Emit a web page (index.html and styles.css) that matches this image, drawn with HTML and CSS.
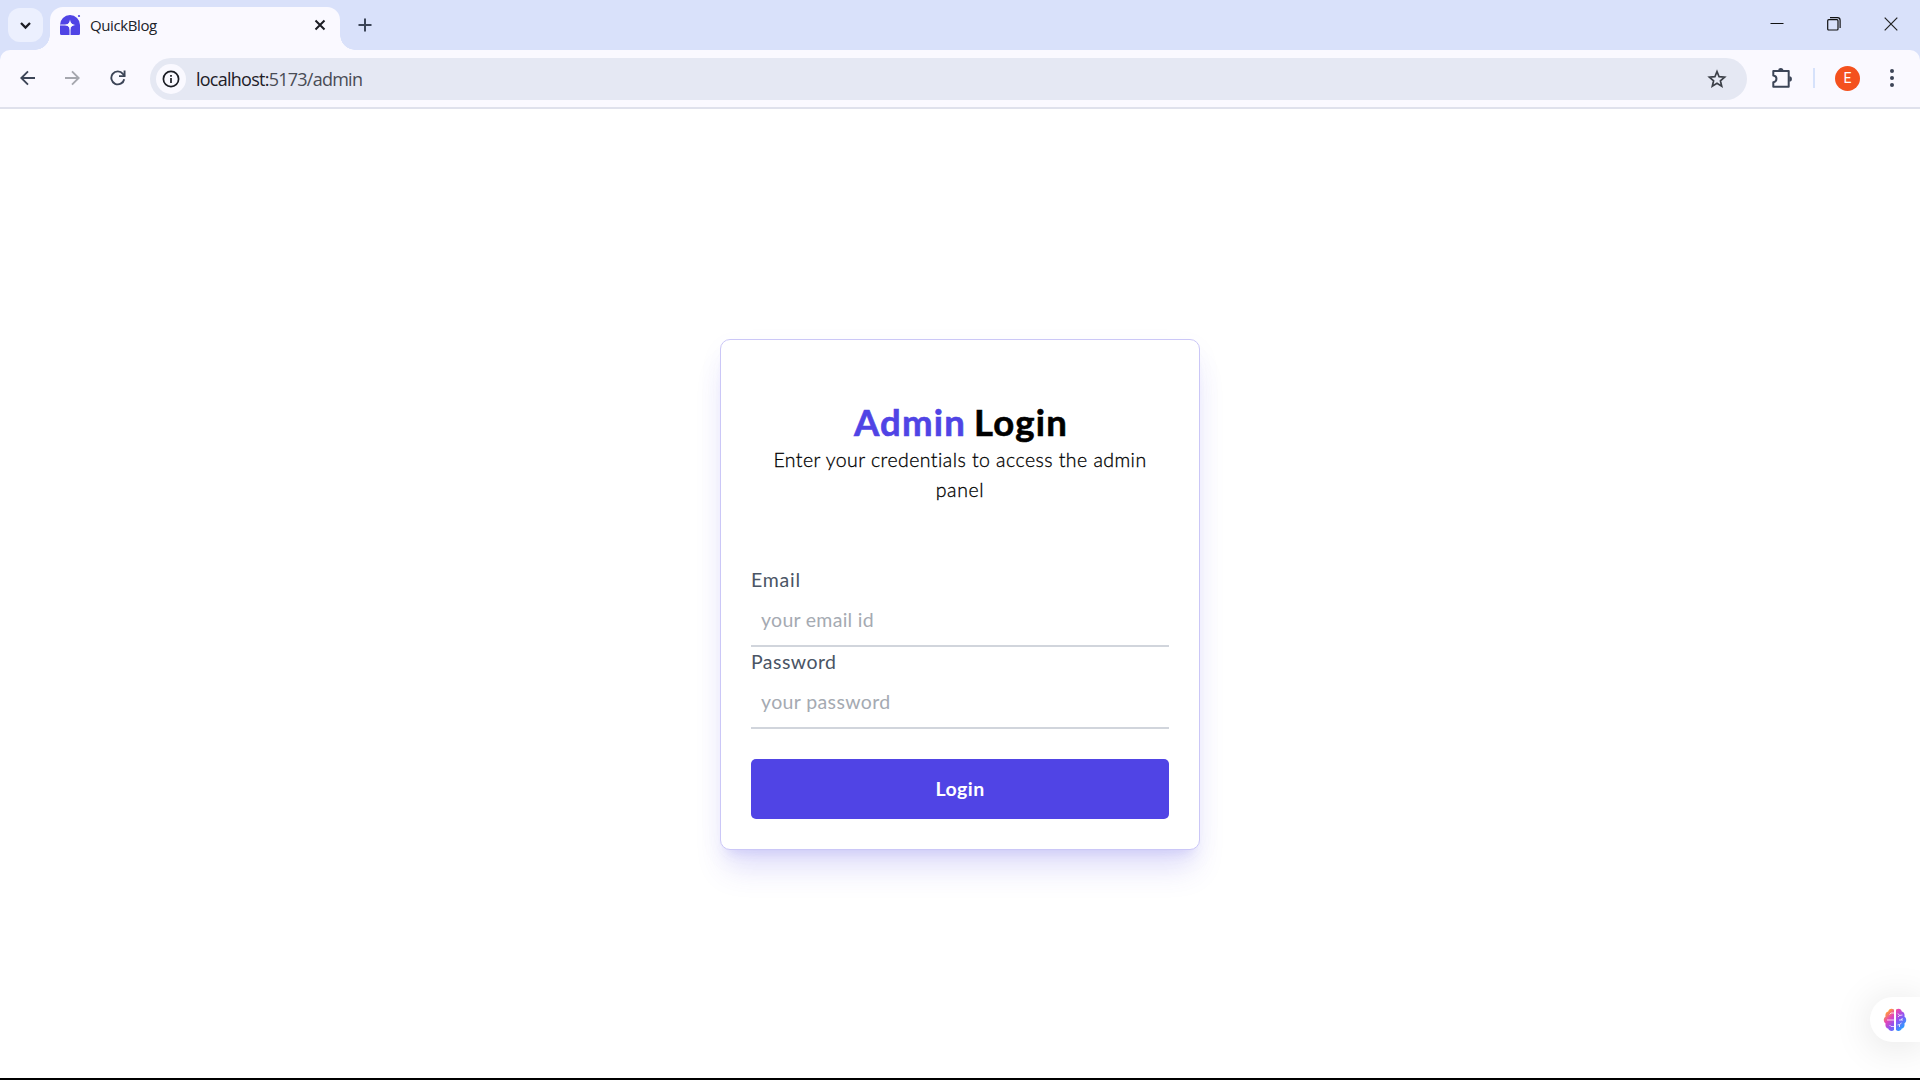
FILE: index.html
```html
<!DOCTYPE html>
<html lang="en">
<head>
<meta charset="utf-8">
<title>QuickBlog</title>
<link rel="stylesheet" href="styles.css">
</head>
<body>
<div class="window">
  <header class="tabstrip">
    <button class="tab-search"><svg width="35" height="34" viewBox="0 0 35 34"><path d="M13 15l4.500 4.500 4.500-4.500" fill="none" stroke="#1b1d24" stroke-width="2.300"/></svg></button>
    <div class="tab">
      <svg class="favicon" width="22" height="22" viewBox="0 0 22 22"><path d="M1 21V11a10 10 0 0 1 20 0v8.500q0 1.500-1.500 1.500h-17Q1 21 1 19.500z" fill="#5044e5"/><path d="M1 10.200h7v1.600H1zM10.200 14h1.700v7h-1.700z" fill="#b9b4f5"/><path d="M11 5.500c.7 3.700 1.700 4.700 5.500 5.500-3.800.8-4.800 1.800-5.500 5.500-.7-3.700-1.700-4.700-5.500-5.500 3.800-.8 4.800-1.800 5.500-5.500z" fill="#fff"/><circle cx="20" cy="2" r="1.100" fill="#5044e5"/></svg>
      <span class="tab-title">QuickBlog</span>
      <svg class="tab-close" width="12" height="12" viewBox="0 0 12 12"><path d="M1.500 1.500l9 9M10.500 1.500l-9 9" stroke="#1b1d24" stroke-width="2"/></svg>
    </div>
    <svg class="new-tab" width="14" height="14" viewBox="0 0 14 14"><path d="M7 .5v13M.5 7h13" stroke="#3c4557" stroke-width="2"/></svg>
    <div class="controls">
      <svg width="14" height="14" viewBox="0 0 14 14"><path d="M.5 6.500h13" stroke="#111"/></svg>
      <svg width="14" height="14" viewBox="0 0 14 14" fill="none" stroke="#111"><rect x=".7" y="2.700" width="10.300" height="10.300" rx="1" stroke-width="1.200"/><path d="M3 .7h7.500q2.600 0 2.600 2.600V11" stroke-width="1.200"/></svg>
      <svg width="14" height="14" viewBox="0 0 14 14"><path d="M.7.7l12.600 12.600M13.300.7L.7 13.300" stroke="#222" stroke-width="1.200"/></svg>
    </div>
  </header>
  <nav class="toolbar">
    <svg class="back" width="16" height="16" viewBox="0 0 16 16"><path d="M15 8H1.800M8 1.300L1.300 8 8 14.700" fill="none" stroke="#3c4557" stroke-width="1.900"/></svg>
    <svg class="forward" width="16" height="16" viewBox="0 0 16 16"><path d="M1 8h13.200M8 1.300L14.700 8 8 14.700" fill="none" stroke="#a5a7ae" stroke-width="1.900"/></svg>
    <svg class="reload" width="16" height="16" viewBox="0 0 16 16"><path d="M14.200 9.200A6.500 6.500 0 1 1 12.900 3.800L14.600 5.800" fill="none" stroke="#3c4557" stroke-width="1.900"/><path d="M15.500.5V7H9V5.200h4.600V.5z" fill="#3c4557"/></svg>
    <div class="omnibox">
      <span class="site-info"><svg width="18" height="18" viewBox="0 0 18 18"><circle cx="9" cy="9" r="7.600" fill="none" stroke="#1b1d24" stroke-width="1.700"/><path d="M9 8v5M9 4.900v1.900" stroke="#1b1d24" stroke-width="1.700"/></svg></span>
      <span class="url"><b>localhost:</b>5173/admin</span>
      <svg class="star" width="20" height="20" viewBox="0 0 20 20"><path d="M10 2.600l2.100 5.100 5.500.5-4.200 3.600 1.300 5.400-4.700-2.900-4.700 2.900 1.300-5.400-4.200-3.600 5.500-.5z" fill="none" stroke="#3c4048" stroke-width="1.700"/></svg>
    </div>
    <svg class="extensions" width="22" height="22" viewBox="0 0 22 22"><path d="M2.300 4h15.400v15.700H2.300v-4.500c4.200-.3 4.200-6.400 0-6.700z" fill="none" stroke="#3c4557" stroke-width="2" stroke-linejoin="round"/><path d="M7.200 3.500a2.600 2.600 0 0 1 5.200 0zM18.300 9.300a2.600 2.600 0 0 1 0 5.200z" fill="#3c4557"/></svg>
    <i class="divider"></i>
    <span class="avatar">E</span>
    <svg class="more" width="6" height="20" viewBox="0 0 6 20" fill="#3c4557"><circle cx="3" cy="3" r="2"/><circle cx="3" cy="10" r="2"/><circle cx="3" cy="17" r="2"/></svg>
  </nav>
  <main class="page">
    <section class="card">
      <h1 class="heading"><span class="accent">Admin</span> <span class="word">Login</span></h1>
      <p class="lead">Enter your credentials to access the admin<br><span class="lead-end">panel</span></p>
      <form class="form">
        <label class="label label-email">Email</label>
        <div class="field field-email">your email id</div>
        <label class="label label-password">Password</label>
        <div class="field field-password">your password</div>
        <button class="submit" type="button">Login</button>
      </form>
    </section>
    <div class="assistant">
      <svg width="24" height="24" viewBox="0 0 24 24"><defs><linearGradient id="g" x1="0" y1="0" x2="1" y2="1"><stop offset=".15" stop-color="#ff9a3c"/><stop offset=".35" stop-color="#e545b8"/><stop offset=".58" stop-color="#8a55f5"/><stop offset=".85" stop-color="#2d9bff"/></linearGradient></defs><path d="M11 1.500C8-.3 5.500 1.500 5.200 3.500 2.800 4 2 6.500 2.600 8.500.2 10 .2 14 2.600 15.500 2 18 3 20 5.200 20.500c.6 2.500 4 3.300 5.800 1.500zM13 1.500c3-1.800 5.500 0 5.800 2 2.400.5 3.200 3 2.600 5 2.400 1.500 2.400 5.500 0 7 .6 2.500-.4 4.500-2.600 5-.6 2.500-4 3.300-5.800 1.500z" fill="url(#g)"/><path d="M11 5H8L6.500 6.500M11 12H4M11 18.500H8L6.500 17M15 5.500l1.500 2 3-.5M16.500 7.500L15 9M16 12h4M18 12l1.500-2M14.500 17l2-.5 2-1.500M16.500 16.500v2.500" fill="none" stroke="#fff" stroke-opacity=".85" stroke-width=".9"/></svg>
    </div>
  </main>
</div>
</body>
</html>
```
FILE: styles.css
```css
* { box-sizing: border-box; }
body { margin: 0; background: #fff; font-family: "Lato", sans-serif; }
button { border: 0; padding: 0; font: inherit; }
svg { display: block; flex: none; }
.window { display: flex; flex-direction: column; width: 1920px; height: 1080px; overflow: hidden; border-bottom: 2px solid #000; background: linear-gradient(#d9e1fa 70px, #fff 70px); }

.tabstrip { display: flex; height: 50px; background: #d9e1fa; }
.tab-search { width: 35px; height: 34px; margin: 8px 0 0 8px; border-radius: 12px; background: #ecf0fe; }
.tab { position: relative; display: flex; align-items: center; width: 290px; height: 43px; margin: 7px 0 0 7px; padding: 0 14px 7px 9px; border-radius: 13px 13px 0 0; background: #faf9ff; }
.tab::before, .tab::after { content: ""; position: absolute; bottom: 0; width: 15px; height: 15px; }
.tab::before { right: 100%; background: radial-gradient(circle at 0 0, transparent 14.5px, #faf9ff 15px); }
.tab::after { left: 100%; background: radial-gradient(circle at 100% 0, transparent 14.5px, #faf9ff 15px); }
.tab-title { flex: 1; margin-left: 9px; color: #202229; font: 15px/20px "Open Sans", sans-serif; letter-spacing: -.4px; }
.new-tab { margin: 18px 0 0 18px; }
.controls { display: flex; gap: 43px; margin: 17px 22px 0 auto; }

.toolbar { display: flex; align-items: center; height: 59px; padding: 0 0 1px; border-bottom: 2px solid #dfe1ec; border-radius: 10px 10px 0 0; background: #faf9ff; }
.back { margin-left: 20px; }
.forward { margin-left: 28px; }
.reload { margin-left: 30px; }
.omnibox { display: flex; align-items: center; width: 1597px; height: 42px; margin: 2px 0 0 24px; padding: 0 20px 0 6px; border-radius: 21px; background: #e5e8f3; }
.site-info { display: grid; place-items: center; width: 30px; height: 30px; border-radius: 50%; background: #faf9ff; }
.url { flex: 1; margin-left: 10px; color: #494c55; font: 18px/24px "Open Sans", sans-serif; letter-spacing: -.75px; }
.url b { color: #1e2027; font-weight: 400; }
.extensions { margin-left: 24px; }
.divider { width: 2px; height: 20px; margin-left: 20px; background: #d6e2fb; }
.avatar { width: 25px; height: 25px; margin-left: 20px; border-radius: 50%; background: #f4511e; color: #fff; font: 14px/25px Roboto, sans-serif; text-align: center; }
.more { margin-left: 29px; }

.page { position: relative; flex: 1; padding-top: 230px; background: #fff; }
.card { width: 480px; height: 511px; margin: 0 auto; padding: 60px 30px 30px; border: 1px solid #cbc7f7; border-radius: 10px; background: #fff; box-shadow: 0 25px 31px -6px rgba(80, 68, 229, .15), 0 10px 12px -7px rgba(80, 68, 229, .14), 0 8px 28px rgba(80, 68, 229, .04); }
.heading { margin: 0; padding-left: 2px; font-size: 36.500px; line-height: 45px; font-weight: 700; text-align: center; color: #000; letter-spacing: 1.2px; word-spacing: -2px; -webkit-text-stroke: .6px; }
.accent { color: #5044e5; }
.lead { margin: 0 0 60px; color: #000; font-size: 19.500px; line-height: 30px; font-weight: 300; text-align: center; letter-spacing: .45px; -webkit-text-stroke: .3px; }
.lead-end { letter-spacing: .65px; }
.form { display: flex; flex-direction: column; color: #4a5565; font-size: 19.500px; line-height: 30px; }
.label-email { letter-spacing: .75px; }
.label-password { letter-spacing: .45px; }
.field { height: 52px; padding: 10px 10px 0; border-bottom: 2px solid #d1d5dc; color: #a5aab2; }
.field-email { letter-spacing: .28px; }
.field-password { letter-spacing: .37px; }
.submit { height: 60px; margin-top: 30px; border-radius: 5px; background: #5044e5; color: #fff; font-weight: 700; letter-spacing: .45px; }

.assistant { position: absolute; right: 0; bottom: 36px; display: flex; align-items: center; width: 50px; height: 45px; padding-left: 13px; border-radius: 23px 0 0 23px; background: #fff; box-shadow: 0 4px 40px rgba(0, 0, 0, .12); }
```
